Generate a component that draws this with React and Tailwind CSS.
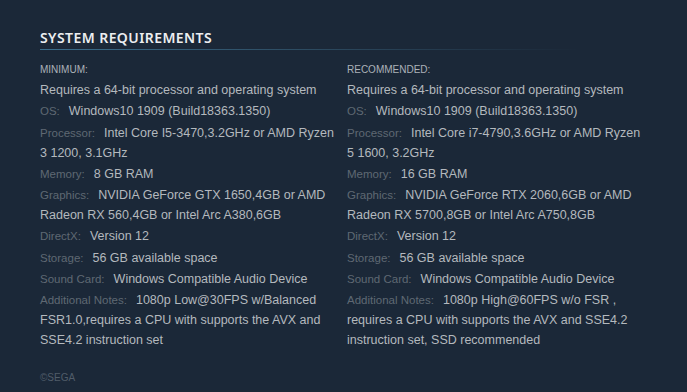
const minimum = [
  { value: 'Requires a 64-bit processor and operating system' },
  { label: 'OS:', value: 'Windows10 1909 (Build18363.1350)' },
  { label: 'Processor:', value: 'Intel Core I5-3470,3.2GHz or AMD Ryzen 3 1200, 3.1GHz' },
  { label: 'Memory:', value: '8 GB RAM' },
  { label: 'Graphics:', value: 'NVIDIA GeForce GTX 1650,4GB or AMD Radeon RX 560,4GB or Intel Arc A380,6GB' },
  { label: 'DirectX:', value: 'Version 12' },
  { label: 'Storage:', value: '56 GB available space' },
  { label: 'Sound Card:', value: 'Windows Compatible Audio Device' },
  { label: 'Additional Notes:', value: '1080p Low@30FPS w/Balanced FSR1.0,requires a CPU with supports the AVX and SSE4.2 instruction set' },
]

const recommended = [
  { value: 'Requires a 64-bit processor and operating system' },
  { label: 'OS:', value: 'Windows10 1909 (Build18363.1350)' },
  { label: 'Processor:', value: 'Intel Core i7-4790,3.6GHz or AMD Ryzen 5 1600, 3.2GHz' },
  { label: 'Memory:', value: '16 GB RAM' },
  { label: 'Graphics:', value: 'NVIDIA GeForce RTX 2060,6GB or AMD Radeon RX 5700,8GB or Intel Arc A750,8GB' },
  { label: 'DirectX:', value: 'Version 12' },
  { label: 'Storage:', value: '56 GB available space' },
  { label: 'Sound Card:', value: 'Windows Compatible Audio Device' },
  { label: 'Additional Notes:', value: '1080p High@60FPS w/o FSR , requires a CPU with supports the AVX and SSE4.2 instruction set, SSD recommended' },
]

function ReqColumn({ title, items }) {
  return (
    <div className="w-[307px] shrink-0 pr-[4px]">
      <div className="text-[10px] uppercase text-[#acb2b8] leading-4 mb-[2px]">{title}</div>
      <ul>
        {items.map((it, i) => (
          <li key={i} className="text-[12.5px] leading-5 text-[#b4b9be] mb-[1.25px]">
            {it.label && <span className="text-[11.5px] text-[#5f6873] mr-[9px]">{it.label}</span>}
            {it.value}
          </li>
        ))}
      </ul>
    </div>
  )
}

export default function App() {
  return (
    <div className="w-[687px] h-[392px] bg-[#1b2838] px-10 pt-[28px] font-['Liberation_Sans',Arial,sans-serif] overflow-hidden">
      <h2 className="text-[14px] font-semibold uppercase tracking-[0.03em] text-[#eceef0] leading-5 pb-[1px] font-['Noto_Sans',sans-serif]">
        System Requirements
      </h2>
      <div className="h-px w-[540px] bg-gradient-to-r from-[#3b6e8c] via-[#2c4a60] to-transparent" />
      <div className="flex mt-[12px]">
        <ReqColumn title="Minimum:" items={minimum} />
        <ReqColumn title="Recommended:" items={recommended} />
      </div>
      <div className="text-[10px] text-[#505c69] mt-[19px]">©SEGA</div>
    </div>
  )
}
